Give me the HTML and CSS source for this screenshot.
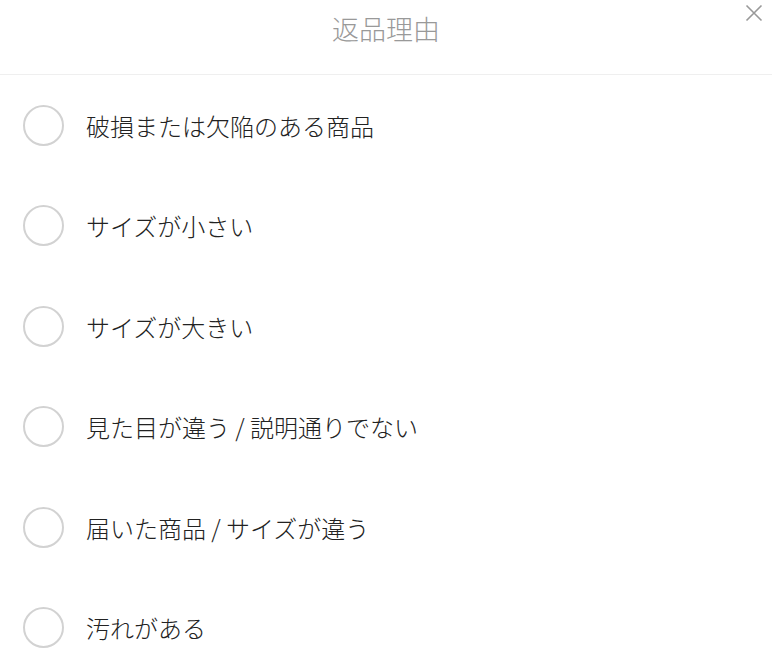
FILE: index.html
```html
<!DOCTYPE html>
<html lang="ja">
<head>
    <meta charset="UTF-8">
    <meta name="viewport" content="width=device-width, initial-scale=1.0">
    <title>返品理由</title>
    <link rel="stylesheet" href="styles.css">
</head>
<body>

    <div class="sheet">
        <div class="sheet-header">
            <h1>返品理由</h1>
            <button class="close" aria-label="閉じる">
                <svg width="18" height="18" viewBox="0 0 18 18">
                    <path d="M1.5 1.5 L16.5 16.5 M16.5 1.5 L1.5 16.5" stroke="#999" stroke-width="1.6" fill="none"/>
                </svg>
            </button>
        </div>

        <ul class="reasons">
            <li><span class="radio"></span>破損または欠陥のある商品</li>
            <li><span class="radio"></span>サイズが小さい</li>
            <li><span class="radio"></span>サイズが大きい</li>
            <li><span class="radio"></span>見た目が違う / 説明通りでない</li>
            <li><span class="radio"></span>届いた商品 / サイズが違う</li>
            <li><span class="radio"></span>汚れがある</li>
        </ul>
    </div>

</body>
</html>
```

FILE: styles.css
```css
body {
    margin: 0;
    background: #fff;
    font-family: "Noto Sans CJK JP", "Noto Sans", sans-serif;
    color: #222;
}
.sheet {
    width: 772px;
}
.sheet-header {
    position: relative;
    height: 74px;
    border-bottom: 1px solid #efefef;
    display: flex;
    align-items: center;
    justify-content: center;
}
.sheet-header h1 {
    margin: 0;
    font-size: 27px;
    font-weight: 300;
    color: #999;
    line-height: 1;
    padding-bottom: 18px;
}
.close {
    position: absolute;
    top: 4px;
    right: 9px;
    width: 18px;
    height: 18px;
    padding: 0;
    border: none;
    background: none;
    cursor: pointer;
}
.reasons {
    list-style: none;
    margin: 0;
    padding: 0;
}
.reasons li {
    height: 100.5px;
    display: flex;
    align-items: center;
    padding-left: 23px;
    font-size: 24px;
    font-weight: 300;
    gap: 22px;
    box-sizing: border-box;
}
.radio {
    width: 37px;
    height: 37px;
    border: 2px solid #d2d2d2;
    border-radius: 50%;
    flex-shrink: 0;
}
```
